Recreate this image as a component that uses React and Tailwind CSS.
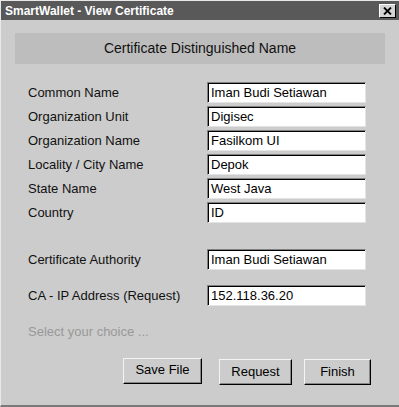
const FIELDS = [
  { label: 'Common Name', value: 'Iman Budi Setiawan' },
  { label: 'Organization Unit', value: 'Digisec' },
  { label: 'Organization Name', value: 'Fasilkom UI' },
  { label: 'Locality / City Name', value: 'Depok' },
  { label: 'State Name', value: 'West Java' },
  { label: 'Country', value: 'ID' },
];

function Field({ label, value, className = '' }) {
  return (
    <div className={`flex items-center h-[21px] ${className}`}>
      <span className="text-[13px] text-[#111]">{label}</span>
      <div className="ml-auto w-[159px] h-[21px] bg-white border-t border-l border-[#808080] border-b-[#e4e4e4] border-r-[#e4e4e4] border-b border-r shadow-[inset_1px_1px_0_#000] pl-[3px] flex items-center text-[13px] text-black leading-none">
        {value}
      </div>
    </div>
  );
}

function Button({ children, className = '' }) {
  return (
    <button className={`h-[26px] bg-[#cccccc] border border-t-[#f4f4f4] border-l-[#f4f4f4] border-b-black border-r-black shadow-[inset_-1px_-1px_0_#888] text-[13px] text-black ${className}`}>
      {children}
    </button>
  );
}

export default function App() {
  return (
    <div className="w-[399px] h-[407px] bg-[#cccccc] flex flex-col border-l border-t border-[#e8e8e8] border-b-2 border-b-[#7a7a7a] overflow-hidden" style={{ fontFamily: '"Liberation Sans", Arial, sans-serif' }}>
      <div className="h-[19px] bg-[#595959] flex items-center pl-[4px] pr-[3px]">
        <span className="text-white font-bold text-[12px]">SmartWallet - View Certificate</span>
        <div className="ml-auto w-[17px] h-[14px] bg-[#d4d4d4] border border-t-white border-l-white border-b-black border-r-black flex items-center justify-center">
          <svg width="9" height="8" viewBox="0 0 9 8">
            <path d="M1 0.5 L8 7.5 M8 0.5 L1 7.5" stroke="#000" strokeWidth="1.8" />
          </svg>
        </div>
      </div>

      <div className="mt-[13px] mx-[14px] h-[31px] bg-[#bdbdbd] flex items-center justify-center text-[14px] text-[#111]">
        Certificate Distinguished Name
      </div>

      <div className="pl-[27px] pr-[33px] mt-[18px] flex flex-col gap-[3px]">
        {FIELDS.map(f => (
          <Field key={f.label} label={f.label} value={f.value} />
        ))}
      </div>

      <div className="pl-[27px] pr-[33px] mt-[26px] flex flex-col gap-[15px]">
        <Field label="Certificate Authority" value="Iman Budi Setiawan" />
        <Field label="CA - IP Address (Request)" value="152.118.36.20" />
      </div>

      <div className="pl-[27px] mt-[16px] text-[13px] text-[#999999]">Select your choice ...</div>

      <div className="flex items-start pl-[122px] mt-[16px]">
        <Button className="w-[79px] pb-[2px]">Save File</Button>
        <Button className="w-[73px] ml-[17px] mt-[1px]">Request</Button>
        <Button className="w-[67px] ml-[12px] mt-[1px]">Finish</Button>
      </div>
    </div>
  );
}
